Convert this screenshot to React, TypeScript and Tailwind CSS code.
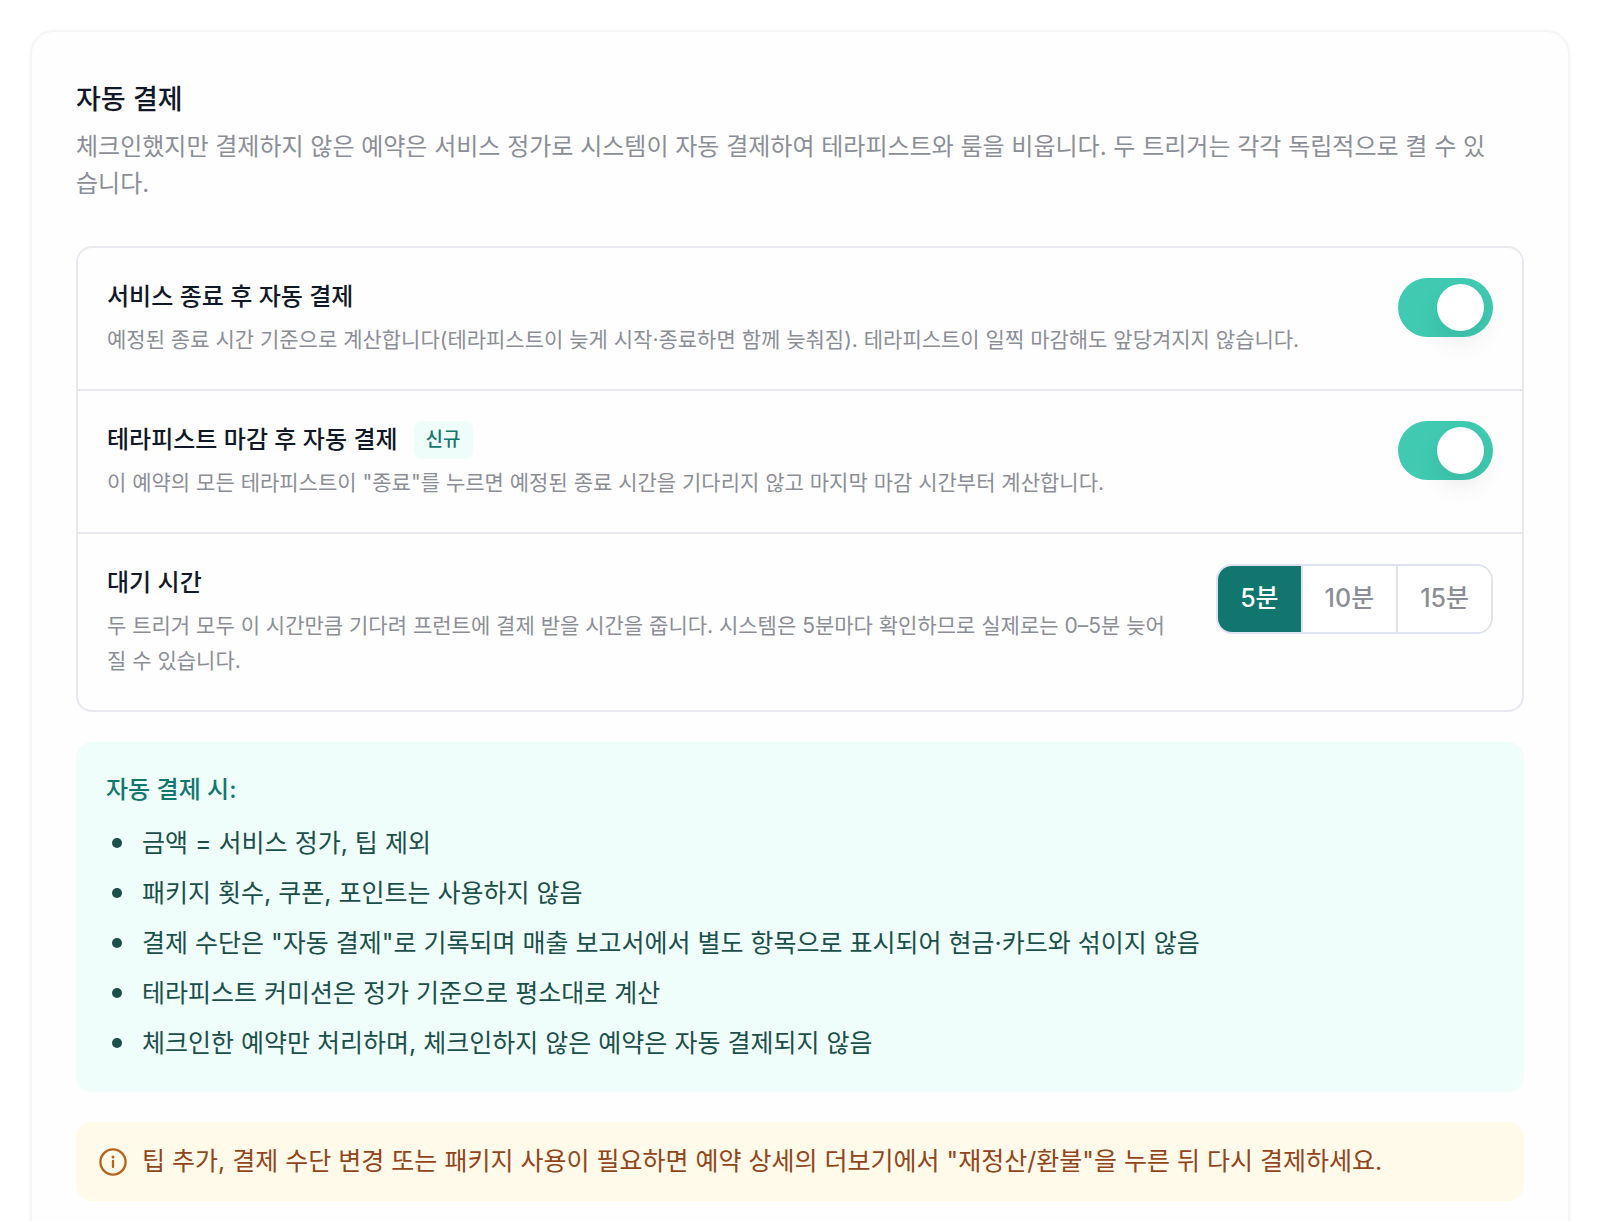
import React, { useState } from "react";

interface ToggleRowProps {
  id: string;
  title: string;
  description: string;
  badge?: string;
  checked: boolean;
  onChange: (checked: boolean) => void;
}

const waitOptions = [5, 10, 15];

const autoPaymentRules = [
  "금액 = 서비스 정가, 팁 제외",
  "패키지 횟수, 쿠폰, 포인트는 사용하지 않음",
  '결제 수단은 "자동 결제"로 기록되며 매출 보고서에서 별도 항목으로 표시되어 현금·카드와 섞이지 않음',
  "테라피스트 커미션은 정가 기준으로 평소대로 계산",
  "체크인한 예약만 처리하며, 체크인하지 않은 예약은 자동 결제되지 않음",
];

const ToggleRow: React.FC<ToggleRowProps> = ({
  id,
  title,
  description,
  badge,
  checked,
  onChange,
}) => {
  return (
    <div className="flex items-start justify-between gap-12 px-[29px] pt-[30px] pb-8">
      <div className="flex min-w-0 flex-col gap-[6px]">
        <div className="flex h-[38px] items-center gap-4">
          <label htmlFor={id} className="text-2xl font-medium text-[#111827]">
            {title}
          </label>
          {badge && (
            <span className="rounded-lg bg-[#effdfa] px-3 text-[19px] leading-[38px] font-medium text-[#12786d]">
              {badge}
            </span>
          )}
        </div>
        <p className="text-[21px] leading-[35px] text-[#8b8e96]">
          {description}
        </p>
      </div>
      <input
        id={id}
        type="checkbox"
        role="switch"
        checked={checked}
        onChange={(e) => onChange(e.target.checked)}
        className="flex h-[59px] w-[95px] shrink-0 cursor-pointer appearance-none items-center rounded-full bg-gray-200 px-[9px] before:size-[47px] before:rounded-full before:bg-white before:shadow-[0_12px_24px_rgba(0,0,0,0.08)] before:content-[''] checked:justify-end checked:bg-[#3fcab1]"
      />
    </div>
  );
};

const App: React.FC = () => {
  const [afterService, setAfterService] = useState(true);
  const [afterTherapist, setAfterTherapist] = useState(true);
  const [waitMinutes, setWaitMinutes] = useState(5);

  return (
    <div className="h-screen overflow-hidden bg-white px-[30px] pt-[30px] font-[Inter,'Noto_Sans_CJK_KR',sans-serif]">
      <section className="min-h-screen rounded-3xl border-2 border-[#f5f5f6] bg-[#fefefe] px-11 pt-11 shadow-[0_2px_4px_rgba(0,0,0,0.04)]">
        <header>
          <h2 className="text-[27px] leading-[48px] font-medium text-[#111827]">
            자동 결제
          </h2>
          <p className="mt-1 pr-5 text-2xl leading-[37px] break-all text-[#8b8e96]">
            체크인했지만 결제하지 않은 예약은 서비스 정가로 시스템이 자동
            결제하여 테라피스트와 룸을 비웁니다. 두 트리거는 각각 독립적으로 켤
            수 있습니다.
          </p>
        </header>

        <div className="mt-11 divide-y-2 divide-[#e7e9ef] rounded-2xl border-2 border-[#e7e9ef]">
          <ToggleRow
            id="after-service"
            title="서비스 종료 후 자동 결제"
            description="예정된 종료 시간 기준으로 계산합니다(테라피스트이 늦게 시작·종료하면 함께 늦춰짐). 테라피스트이 일찍 마감해도 앞당겨지지 않습니다."
            checked={afterService}
            onChange={setAfterService}
          />
          <ToggleRow
            id="after-therapist"
            title="테라피스트 마감 후 자동 결제"
            badge="신규"
            description='이 예약의 모든 테라피스트이 "종료"를 누르면 예정된 종료 시간을 기다리지 않고 마지막 마감 시간부터 계산합니다.'
            checked={afterTherapist}
            onChange={setAfterTherapist}
          />
          <div className="flex items-start justify-between gap-11 px-[29px] pt-[30px] pb-8">
            <div className="flex min-w-0 flex-col gap-[6px]">
              <h3
                id="wait-time"
                className="text-2xl leading-[38px] font-medium text-[#111827]"
              >
                대기 시간
              </h3>
              <p className="text-[21px] leading-[35px] break-all text-[#8b8e96]">
                두 트리거 모두 이 시간만큼 기다려 프런트에 결제 받을 시간을
                줍니다. 시스템은 5분마다 확인하므로 실제로는 0–5분 늦어질 수
                있습니다.
              </p>
            </div>
            <div
              role="group"
              aria-labelledby="wait-time"
              className="flex shrink-0 divide-x-2 divide-[#dfe3f1] overflow-hidden rounded-2xl border-2 border-[#dfe3f1]"
            >
              {waitOptions.map((minutes) => (
                <button
                  key={minutes}
                  type="button"
                  aria-pressed={waitMinutes === minutes}
                  onClick={() => setWaitMinutes(minutes)}
                  className={`h-[66px] cursor-pointer px-[22px] text-[25px] font-medium ${
                    waitMinutes === minutes
                      ? "bg-[#10766e] text-white"
                      : "bg-white text-[#8b8e96]"
                  }`}
                >
                  {minutes}분
                </button>
              ))}
            </div>
          </div>
        </div>

        <div className="mt-[30px] rounded-2xl bg-[#effefb] p-[30px]">
          <h3 className="text-2xl leading-9 font-medium text-[#12786d]">
            자동 결제 시:
          </h3>
          <ul className="mt-4 flex flex-col gap-3 pl-[6px] text-[25px] leading-[38px] text-[#1b4f4a]">
            {autoPaymentRules.map((rule) => (
              <li
                key={rule}
                className="flex items-center gap-5 before:size-[10px] before:shrink-0 before:rounded-full before:bg-[#1b4f4a] before:content-['']"
              >
                {rule}
              </li>
            ))}
          </ul>
        </div>

        <div className="mt-[30px] flex items-center gap-[15px] rounded-2xl bg-[#fffaea] px-[23px] py-5 text-[#92451a]">
          <svg
            viewBox="0 0 28 28"
            fill="none"
            stroke="#b8621b"
            strokeWidth="2.3"
            className="size-7 shrink-0"
            aria-hidden="true"
          >
            <circle cx="14" cy="14" r="12.6" />
            <path d="M14 13v6" strokeLinecap="round" />
            <circle cx="14" cy="9" r="1.5" fill="#b8621b" stroke="none" />
          </svg>
          <p className="text-[25px] leading-[39px]">
            팁 추가, 결제 수단 변경 또는 패키지 사용이 필요하면 예약 상세의
            더보기에서 "재정산/환불"을 누른 뒤 다시 결제하세요.
          </p>
        </div>
      </section>
    </div>
  );
};

export default App;
